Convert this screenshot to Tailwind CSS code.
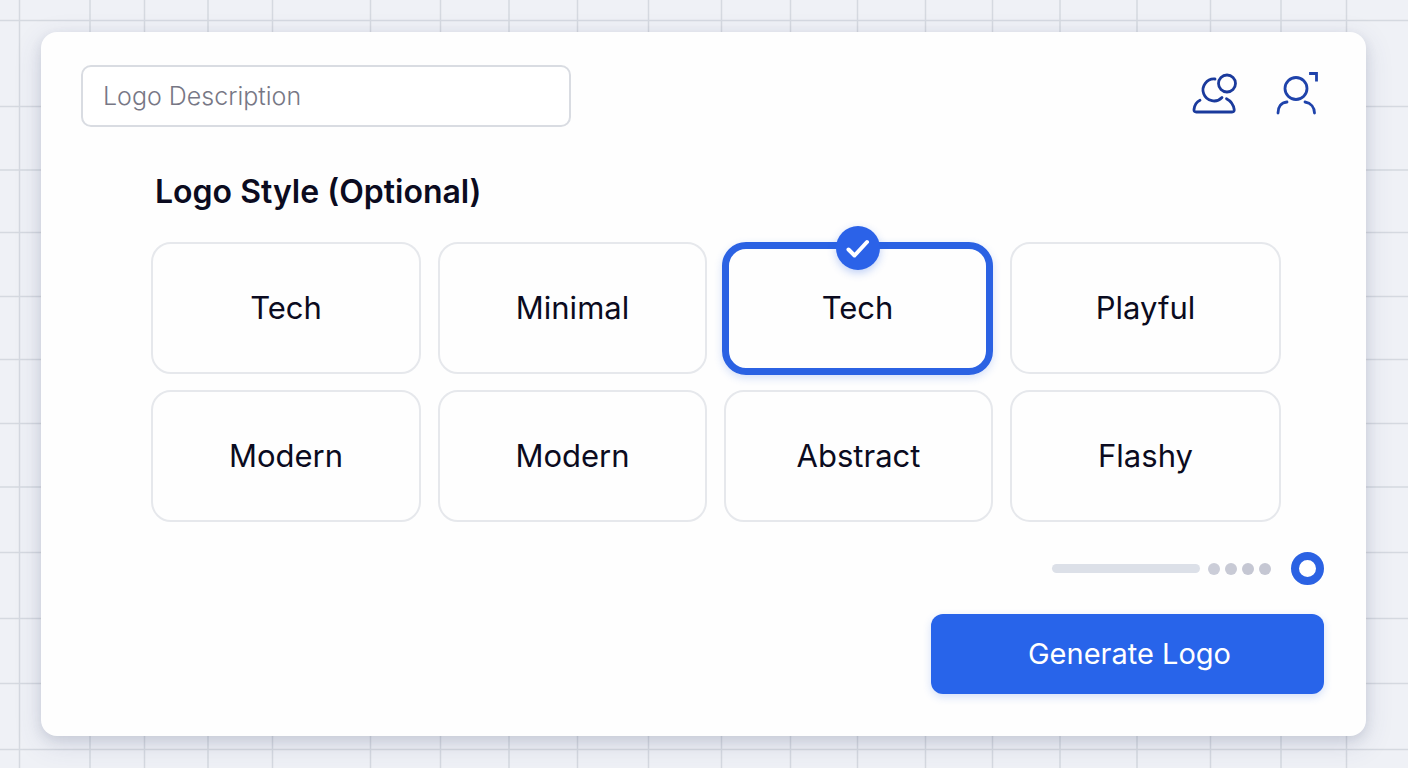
<!DOCTYPE html>
<html lang="en">
<head>
  <meta charset="UTF-8">
  <meta name="viewport" content="width=device-width, initial-scale=1.0">
  <title>Logo Generator</title>
  <script src="https://cdn.jsdelivr.net/npm/@tailwindcss/browser@4"></script>
</head>
<body class="relative min-h-screen overflow-x-hidden bg-[#eff1f6] py-8 pr-[42px] pl-[41px] font-['Inter',sans-serif] text-[#0b0b20]">
  <!-- Background grid -->
  <svg class="absolute inset-0 -z-10 h-full w-full" fill="none" stroke="#d5d9e0" stroke-width="1.5" aria-hidden="true">
    <path d="M19.5 0v2000M90 0v2000M144.5 0v2000M208 0v2000M272.5 0v2000M370.5 0v2000M440.5 0v2000M509 0v2000M577.5 0v2000M648.5 0v2000M721.5 0v2000M790.5 0v2000M857.5 0v2000M925.5 0v2000M992.5 0v2000M1060 0v2000M1137 0v2000M1210.5 0v2000M1281 0v2000M1346.5 0v2000"/>
    <path d="M0 20.5h4000M0 106.500h4000M0 170h4000M0 232.5h4000M0 296.500h4000M0 359.5h4000M0 423.5h4000M0 487h4000M0 552.5h4000M0 618.5h4000M0 683.5h4000M0 749.500h4000"/>
  </svg>

  <main class="rounded-2xl bg-[#fefefe] pt-[33px] pr-[42px] pb-[42px] pl-10 shadow-[0_8px_28px_rgba(60,70,120,0.15),0_4px_12px_rgba(60,70,100,0.12)]">
    <!-- Header -->
    <header class="flex items-start justify-between">
      <input type="text" aria-label="Logo Description" placeholder="Logo Description" class="h-[62px] w-[490px] rounded-[10px] border-2 border-[#d9dce2] bg-white px-5 text-[25px] font-light placeholder:text-[#777785]">
      <div class="flex gap-8 pt-1">
        <button type="button" aria-label="Team">
          <svg class="h-12 w-[50px]" viewBox="0 0 50 48" fill="none" stroke="#1a3a9c" stroke-width="2.8" stroke-linecap="round">
            <path d="M23 10A11 11 0 1 0 30 28.500"/>
            <circle cx="35" cy="14.500" r="8.500"/>
            <path d="M8 31.300C4.500 33 2.500 36.500 2 40.500Q1.700 43 4.300 43H40Q42.500 43 42.200 40.500C41.500 36 39 32 34.500 29.700"/>
          </svg>
        </button>
        <button type="button" aria-label="Account">
          <svg class="h-12 w-[50px]" viewBox="0 0 50 48" fill="none" stroke="#1f43ab" stroke-width="2.8" stroke-linecap="round">
            <circle cx="22" cy="19.500" r="11"/>
            <path d="M4 44C4 38 7 33.500 13 33M31 33C37 34 40.500 38.500 40.500 44"/>
            <path d="M36.500 4.500H42.500V11" stroke-linecap="square"/>
          </svg>
        </button>
      </div>
    </header>

    <!-- Logo styles -->
    <fieldset class="mt-[45px] mr-[43px] ml-[70px]">
      <legend class="pl-1 text-[32px] leading-10 font-semibold">Logo Style (Optional)</legend>
      <div class="mt-[30px] grid grid-cols-[270fr_269fr_269fr_271fr] gap-x-[17px] gap-y-[15px] text-[31px]">
        <label class="flex h-[132px] items-center justify-center rounded-[20px] border-2 border-[#e6e8ec]">
          <input type="radio" name="style" class="sr-only">Tech
        </label>
        <label class="flex h-[132px] items-center justify-center rounded-[20px] border-2 border-[#e6e8ec]">
          <input type="radio" name="style" class="sr-only">Minimal
        </label>
        <label class="relative -ml-0.5 flex h-[133px] items-center justify-center rounded-3xl border-[7px] border-[#2b62e3] shadow-[0_3px_8px_rgba(43,98,227,0.2)]">
          <input type="radio" name="style" class="sr-only" checked>Tech
          <span class="absolute -top-[23px] left-1/2 flex size-11 -translate-x-1/2 items-center justify-center rounded-full bg-[#2b62e8] shadow-[0_3px_8px_rgba(43,98,227,0.3)]">
            <svg class="size-6" viewBox="0 0 24 24" fill="none" stroke="#fff" stroke-width="4" stroke-linecap="round" stroke-linejoin="round"><path d="M2.500 13.500l6 6L21 6"/></svg>
          </span>
        </label>
        <label class="flex h-[132px] items-center justify-center rounded-[20px] border-2 border-[#e6e8ec]">
          <input type="radio" name="style" class="sr-only">Playful
        </label>
        <label class="flex h-[132px] items-center justify-center rounded-[20px] border-2 border-[#e6e8ec]">
          <input type="radio" name="style" class="sr-only">Modern
        </label>
        <label class="flex h-[132px] items-center justify-center rounded-[20px] border-2 border-[#e6e8ec]">
          <input type="radio" name="style" class="sr-only">Modern
        </label>
        <label class="flex h-[132px] items-center justify-center rounded-[20px] border-2 border-[#e6e8ec]">
          <input type="radio" name="style" class="sr-only">Abstract
        </label>
        <label class="flex h-[132px] items-center justify-center rounded-[20px] border-2 border-[#e6e8ec]">
          <input type="radio" name="style" class="sr-only">Flashy
        </label>
      </div>
    </fieldset>

    <!-- Progress -->
    <div class="mt-[30px] flex items-center justify-end">
      <div class="h-[9px] w-[148px] rounded-full bg-[#dce0e8]"></div>
      <div class="ml-2 flex gap-[5px]">
        <span class="size-3 rounded-full bg-[#cbcdd8]"></span>
        <span class="size-3 rounded-full bg-[#c8cad5]"></span>
        <span class="size-3 rounded-full bg-[#c5c7d3]"></span>
        <span class="size-3 rounded-full bg-[#c5c7d3]"></span>
      </div>
      <span class="ml-5 size-[33px] rounded-full border-8 border-[#2b62e3] bg-white"></span>
    </div>

    <div class="mt-[29px] flex justify-end">
      <button type="button" class="h-20 w-[393px] rounded-xl bg-[#2864ea] pl-1 text-[29px] text-white shadow-[0_3px_8px_rgba(43,98,227,0.2)]">Generate Logo</button>
    </div>
  </main>
</body>
</html>
